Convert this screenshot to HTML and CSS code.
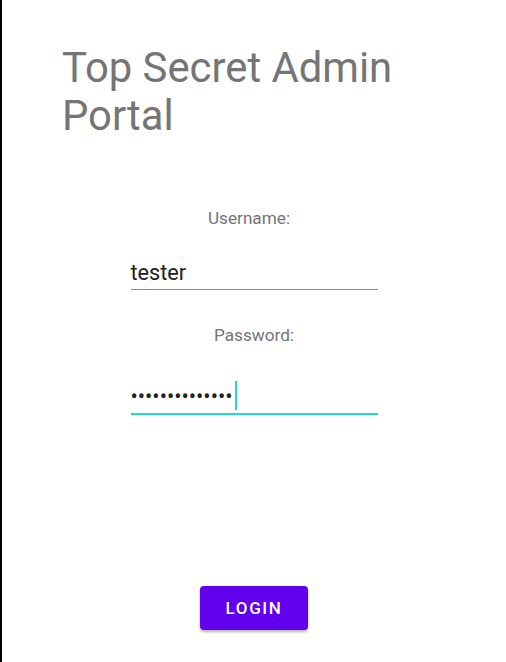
FILE: index.html
```html
<!DOCTYPE html>
<html lang="en">
<head>
<meta charset="utf-8">
<title>Top Secret Admin Portal</title>
<link rel="stylesheet" href="styles.css">
</head>
<body>
<main class="page">
  <h1 class="title">Top Secret Admin<br>Portal</h1>
  <form class="form">
    <label class="label label-user">Username:</label>
    <div class="field">tester</div>
    <label class="label label-pass">Password:</label>
    <div class="field field-focused"><span class="dots">••••••••••••••</span><span class="cursor"></span></div>
  </form>
  <div class="actions">
    <button type="button" class="btn">LOGIN</button>
  </div>
</main>
</body>
</html>
```
FILE: styles.css
```css
html, body {
  margin: 0;
  padding: 0;
  background: #ffffff;
}
body {
  font-family: Roboto, "Noto Sans", sans-serif;
}
.page {
  box-sizing: border-box;
  min-height: 662px;
  border-left: 2px solid #000000;
  padding-top: 44px;
  display: flex;
  flex-direction: column;
}
.title {
  margin: 0 0 0 60px;
  font-size: 41.8px;
  line-height: 48px;
  font-weight: 400;
  color: #757575;
}
.form {
  width: 247px;
  margin: 68px auto 0;
  display: flex;
  flex-direction: column;
}
.label {
  display: block;
  text-align: center;
  font-size: 17.2px;
  line-height: 20px;
  color: #757575;
}
.label-user {
  padding-right: 10px;
}
.label-pass {
  margin-top: 35px;
}
.field {
  margin-top: 32px;
  font-size: 21.6px;
  line-height: 26px;
  color: #212121;
  padding-bottom: 3px;
  border-bottom: 1px solid #8a8a8a;
}
.field-focused {
  margin-top: 39px;
  border-bottom: 2px solid #1fdcc6;
}
.dots {
  letter-spacing: 0px;
}
.cursor {
  display: inline-block;
  width: 2px;
  height: 29px;
  margin-top: -3px;
  margin-left: 2px;
  vertical-align: -6px;
  background: #1fdcc6;
}
.actions {
  margin-top: 171px;
  display: flex;
  justify-content: center;
}
.btn {
  width: 108px;
  height: 44px;
  border: none;
  border-radius: 4px;
  background: #6200ee;
  color: #ffffff;
  font-family: Roboto, "Noto Sans", sans-serif;
  font-weight: 500;
  font-size: 17px;
  letter-spacing: 1.6px;
  box-shadow: 0 2px 3px rgba(0, 0, 0, 0.3);
  padding: 0;
}
```
